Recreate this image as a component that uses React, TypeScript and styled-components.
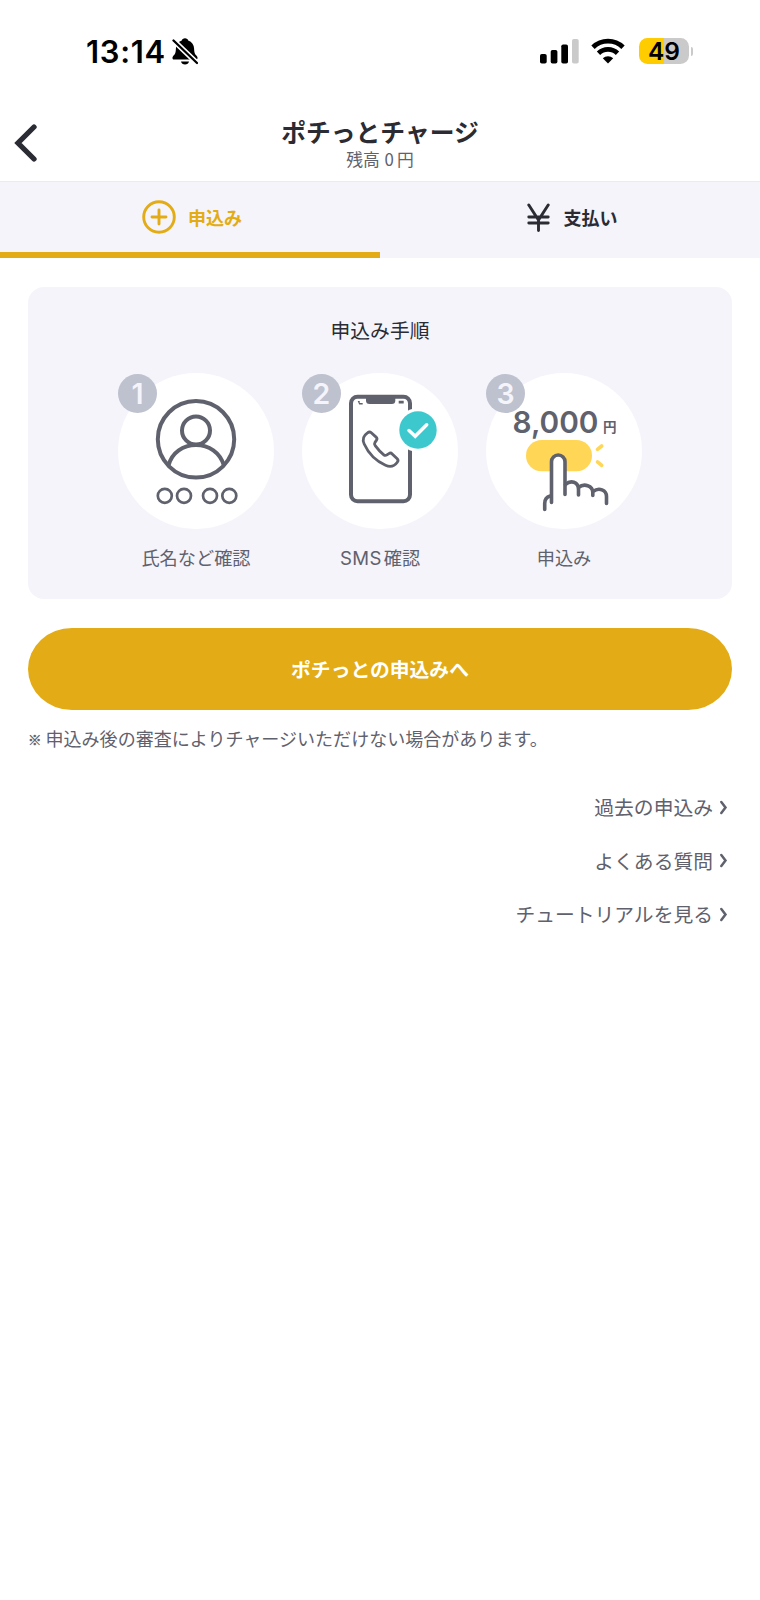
import React from "react";
import styled, { createGlobalStyle } from "styled-components";

const gold = "#e3ac16";
const ink = "#2a2b33";
const slate = "#5f616d";
const mist = "#f4f4fa";

const GlobalStyle = createGlobalStyle`
  * { box-sizing: border-box; }
  body {
    margin: 0;
    background: #fff;
    color: ${ink};
    font-family: "Noto Sans CJK JP", sans-serif;
  }
  button { font: inherit; border: 0; background: none; padding: 0; }
  svg { display: block; flex: none; }
`;

const Screen = styled.div`
  width: 760px;
  height: 1600px;
  overflow: hidden;
  background: #fff;
`;

const StatusBar = styled.div`
  height: 102px;
  padding: 0 67px 0 86px;
  display: flex;
  justify-content: space-between;
  align-items: center;
  color: #000;
  font-family: Inter, sans-serif;
`;

const StatusGroup = styled.div<{ $gap: number }>`
  display: flex;
  align-items: center;
  gap: ${(p) => p.$gap}px;
`;

const Clock = styled.span`
  width: 80px;
  padding-top: 1px;
  font-size: 31px;
  font-weight: 600;
  line-height: 40px;
  letter-spacing: 0.7px;
  white-space: nowrap;
`;

const Battery = styled.div`
  margin-left: 1.5px;
  display: flex;
  align-items: center;
  gap: 1.5px;
`;

const BatteryBody = styled.div`
  width: 50px;
  height: 26px;
  border-radius: 8.5px;
  background: linear-gradient(90deg, #ffcc00 50%, #cacaca 50%);
  font-size: 24.5px;
  font-weight: 600;
  line-height: 26px;
  text-align: center;
`;

const BatteryTip = styled.div`
  width: 2.5px;
  height: 9px;
  border-radius: 0 4px 4px 0;
  background: #cacaca;
`;

const Header = styled.header`
  height: 79px;
  display: grid;
  grid-template-columns: 60px 1fr 60px;
`;

const BackButton = styled.button`
  padding: 22px 0 0 14px;
  display: flex;
`;

const Titles = styled.div`
  padding-top: 12px;
  text-align: center;
`;

const Title = styled.h1`
  margin: 0;
  font-size: 24.8px;
  font-weight: 700;
  line-height: 34px;
`;

const Balance = styled.div`
  margin-top: 1px;
  font-size: 16.8px;
  line-height: 20px;
  color: ${slate};
  word-spacing: 1px;
`;

const Amount = styled.span`
  margin-right: 3px;
`;

const Tabs = styled.nav`
  height: 77px;
  display: grid;
  grid-template-columns: 1fr 1fr;
  background: ${mist};
  border-top: 1px solid #eaeaf2;
`;

const Tab = styled.button<{ $active?: boolean }>`
  display: flex;
  align-items: center;
  justify-content: center;
  gap: ${(p) => (p.$active ? 12 : 14)}px;
  padding: 0 0 ${(p) => (p.$active ? 0 : 6)}px 4px;
  border-bottom: ${(p) => (p.$active ? `6px solid ${gold}` : "0")};
  color: ${(p) => (p.$active ? gold : ink)};
  font-size: 18px;
  font-weight: 700;
`;

const Main = styled.main`
  padding: 29px 28px 0;
`;

const Card = styled.section`
  height: 312px;
  padding-top: 28px;
  border-radius: 16px;
  background: ${mist};
`;

const CardTitle = styled.h2`
  margin: 0;
  font-size: 19.8px;
  font-weight: 400;
  line-height: 30px;
  text-align: center;
`;

const Steps = styled.div`
  margin-top: 28px;
  display: flex;
  justify-content: center;
  gap: 28px;
`;

const Step = styled.div`
  width: 156px;
`;

const StepDisc = styled.div`
  position: relative;
  height: 156px;
  border-radius: 50%;
  background: #fff;
`;

const StepNumber = styled.span`
  position: absolute;
  top: 0.5px;
  left: 0;
  width: 39px;
  height: 39px;
  border-radius: 50%;
  background: #bec1ce;
  color: ${mist};
  font: 600 28.5px/40px Inter, sans-serif;
  text-align: center;
`;

const StepLabel = styled.div`
  margin-top: 14px;
  font-size: 18.2px;
  line-height: 28px;
  color: ${slate};
  text-align: center;
  white-space: nowrap;
`;

const Latin = styled.span`
  margin-right: 2px;
  font-family: Inter, sans-serif;
  font-size: 18.6px;
  line-height: 1;
  letter-spacing: 0.4px;
`;

const PrimaryButton = styled.button`
  display: block;
  width: 100%;
  height: 82px;
  margin-top: 28.5px;
  border-radius: 44px / 41px;
  background: ${gold};
  color: #fff;
  font-size: 19.8px;
  font-weight: 700;
`;

const Note = styled.p`
  height: 28px;
  margin: 14px 0 0;
  display: flex;
  align-items: center;
  gap: 4px;
  font-size: 18.05px;
  line-height: 28px;
  color: ${slate};
  white-space: nowrap;
`;

const NoteMark = styled.span`
  padding-top: 3px;
  font-size: 13.5px;
  line-height: 22px;
  -webkit-text-stroke: 0.4px ${slate};
`;

const Links = styled.div`
  margin-top: 40.5px;
  display: flex;
  flex-direction: column;
  align-items: flex-end;
  gap: 23.7px;
`;

const LinkRow = styled.a`
  padding-right: 4px;
  display: flex;
  align-items: center;
  gap: 6px;
  font-size: 19.8px;
  line-height: 30px;
  color: ${slate};
`;

const BellOff = () => (
  <svg width="26" height="27" viewBox="0 0 26 27">
    <path d="M13 .3c-1.700 0-2.900 1-3.200 2.200C6 3.800 4 7 3.900 10.500c-.1 4.500-.8 5.500-2.700 7.600-1.300 1.500-.9 3.400 1 3.400h21.600c1.900 0 2.300-1.900 1-3.400-1.900-2.100-2.600-3.100-2.700-7.600C22 7 20 3.800 16.200 2.500 15.900 1.300 14.700.3 13 .3z" />
    <path d="M9 23.500h8c-.4 1.900-1.900 3-4 3s-3.600-1.100-4-3z" />
    <path d="M1.500 2.500 25 25" stroke="#fff" strokeWidth="5.400" />
    <path d="M1.500 2.500 25 25" stroke="#000" strokeWidth="2.300" strokeLinecap="round" />
  </svg>
);

const Signal = () => (
  <svg width="39" height="26" viewBox="0 0 39 26">
    <rect x="0" y="16" width="6.700" height="9.500" rx="1.800" />
    <rect x="10.700" y="12" width="6.700" height="13.500" rx="1.800" />
    <rect x="21.300" y="6.500" width="6.700" height="19" rx="1.800" />
    <rect x="32" y="1" width="6.700" height="24.500" rx="1.800" fill="#cacaca" />
  </svg>
);

const Wifi = () => (
  <svg width="34" height="26" viewBox="0 0 34 26" fill="none" stroke="#000" strokeWidth="4.800">
    <path d="M2 9.200a21.500 21.500 0 0 1 30 0" />
    <path d="M7.500 15.200a13.700 13.700 0 0 1 19 0" />
    <path d="M17 25.500l-5.200-5.200a7.600 7.600 0 0 1 10.400 0z" fill="#000" stroke="none" />
  </svg>
);

const Back = () => (
  <svg width="23" height="38" viewBox="0 0 23 38">
    <path d="M20 3 4 19l16 16" fill="none" stroke={ink} strokeWidth="5.300" strokeLinecap="round" />
  </svg>
);

const PlusCircle = () => (
  <svg width="34" height="34" viewBox="0 0 34 34" fill="none" stroke={gold} strokeWidth="2.900">
    <circle cx="17" cy="17" r="15.300" />
    <path d="M17 10v14M10 17h14" strokeLinecap="round" />
  </svg>
);

const Yen = () => (
  <svg width="23" height="29" viewBox="0 0 23 29" fill="none" stroke={ink} strokeWidth="2.900" strokeLinecap="round">
    <path d="M1.800 2l9.700 15L21.200 2M11.500 16v11.500M1.800 14h19.400M1.800 20h19.400" />
  </svg>
);

const Chevron = () => (
  <svg width="9" height="15" viewBox="0 0 9 15">
    <path d="M2.300 2l4.200 5.500L2.300 13" fill="none" stroke={slate} strokeWidth="2.500" strokeLinecap="round" />
  </svg>
);

const Drawing = ({ children }: { children: React.ReactNode }) => (
  <svg width="156" height="156" viewBox="0 0 156 156" fill="none" stroke={slate} strokeWidth="4">
    <g transform="translate(0 .5)">{children}</g>
  </svg>
);

const PersonDrawing = () => (
  <Drawing>
    <circle cx="78" cy="65.800" r="38.200" />
    <circle cx="78" cy="57" r="14" />
    <path d="M50.700 91.500C54 79 65 71.500 78 71.500s24 7.500 27.700 20" />
    <g strokeWidth="2.700">
      {[46.8, 66, 92, 111.3].map((x) => (
        <circle key={x} cx={x} cy="122.300" r="7" />
      ))}
    </g>
  </Drawing>
);

const PhoneDrawing = () => (
  <Drawing>
    <rect x="49" y="23.200" width="59" height="104.600" rx="6.500" />
    <path d="M64 22h29.300v5a3.500 3.500 0 0 1-3.500 3.500H67.500A3.500 3.500 0 0 1 64 27z" fill={slate} stroke="none" />
    <path d="M55.700 27.500h2v2h3V31h-3.500zM96.700 27.200h5v2.800h-5z" fill={slate} stroke="none" />
    <path
      d="M65.500 59.300q2-1.600 3.800 0l4.800 4.300q1.600 1.500.3 3.300l-1.400 2q-1 1.500.2 3.200 4 5.500 8.600 9.200 1.500 1.200 3.100.1l2-1.300q1.800-1.200 3.300.3l5 4.800q1.600 1.700.1 3.500c-3 4.200-6.800 5.300-11.800 3.100C73 87 66.500 80 62.200 70.500c-2.100-4.600-1.200-8.200 3.300-11.200z"
      strokeWidth="2.800"
    />
    <circle cx="116" cy="56.500" r="22" fill="#fff" stroke="none" />
    <circle cx="116" cy="56.500" r="18.700" fill="#3dc8cd" stroke="none" />
    <path d="M107 57l6.200 5.800 11.500-11.500" stroke="#fff" strokeWidth="3.500" strokeLinecap="round" />
  </Drawing>
);

const TapDrawing = () => (
  <Drawing>
    <rect x="40" y="66.500" width="66" height="31.300" rx="15.600" fill="#ffd655" stroke="none" />
    <path d="M111.500 75.800l4.200-3.300M111.500 88.300l4.200 3.500" stroke="#ffd655" strokeWidth="3.600" strokeLinecap="round" />
    <path
      d="M65.500 129V88.200a6.750 6.750 0 0 1 13.500 0V121"
      fill="#fff"
      strokeWidth="3.600"
      strokeLinecap="round"
    />
    <path
      d="M58.700 136v-6q0-6 5.500-7.500M79.500 111c5-4.500 13-3 13 5v5.500M92.500 114c5.500-4.500 14.300-2 14.300 5v3M107 118c6-4.500 13.500-1.500 13.500 5v7"
      strokeWidth="3.600"
      strokeLinecap="round"
    />
    <g fill={slate} stroke="none">
      <text x="26.500" y="59.300" textLength="86" lengthAdjust="spacingAndGlyphs" fontFamily="Inter, sans-serif" fontSize="30" fontWeight="600">
        8,000
      </text>
      <text x="117" y="58" fontFamily="Noto Sans CJK JP, sans-serif" fontSize="13.500" fontWeight="700">
        円
      </text>
    </g>
  </Drawing>
);

const steps = [
  { latin: "", label: "氏名など確認", drawing: <PersonDrawing /> },
  { latin: "SMS", label: "確認", drawing: <PhoneDrawing /> },
  { latin: "", label: "申込み", drawing: <TapDrawing /> },
];

const links = ["過去の申込み", "よくある質問", "チュートリアルを見る"];

export default function App() {
  return (
    <Screen>
      <GlobalStyle />
      <StatusBar>
        <StatusGroup $gap={6}>
          <Clock>13:14</Clock>
          <BellOff />
        </StatusGroup>
        <StatusGroup $gap={12.5}>
          <Signal />
          <Wifi />
          <Battery>
            <BatteryBody>49</BatteryBody>
            <BatteryTip />
          </Battery>
        </StatusGroup>
      </StatusBar>
      <Header>
        <BackButton aria-label="戻る">
          <Back />
        </BackButton>
        <Titles>
          <Title>ポチっとチャージ</Title>
          <Balance>
            残高 <Amount>0</Amount>円
          </Balance>
        </Titles>
      </Header>
      <Tabs>
        <Tab $active>
          <PlusCircle />
          申込み
        </Tab>
        <Tab>
          <Yen />
          支払い
        </Tab>
      </Tabs>
      <Main>
        <Card>
          <CardTitle>申込み手順</CardTitle>
          <Steps>
            {steps.map((step, i) => (
              <Step key={step.label}>
                <StepDisc>
                  {step.drawing}
                  <StepNumber>{i + 1}</StepNumber>
                </StepDisc>
                <StepLabel>
                  {step.latin && <Latin>{step.latin}</Latin>}
                  {step.label}
                </StepLabel>
              </Step>
            ))}
          </Steps>
        </Card>
        <PrimaryButton>ポチっとの申込みへ</PrimaryButton>
        <Note>
          <NoteMark>※</NoteMark>
          申込み後の審査によりチャージいただけない場合があります。
        </Note>
        <Links>
          {links.map((label) => (
            <LinkRow key={label}>
              {label}
              <Chevron />
            </LinkRow>
          ))}
        </Links>
      </Main>
    </Screen>
  );
}
